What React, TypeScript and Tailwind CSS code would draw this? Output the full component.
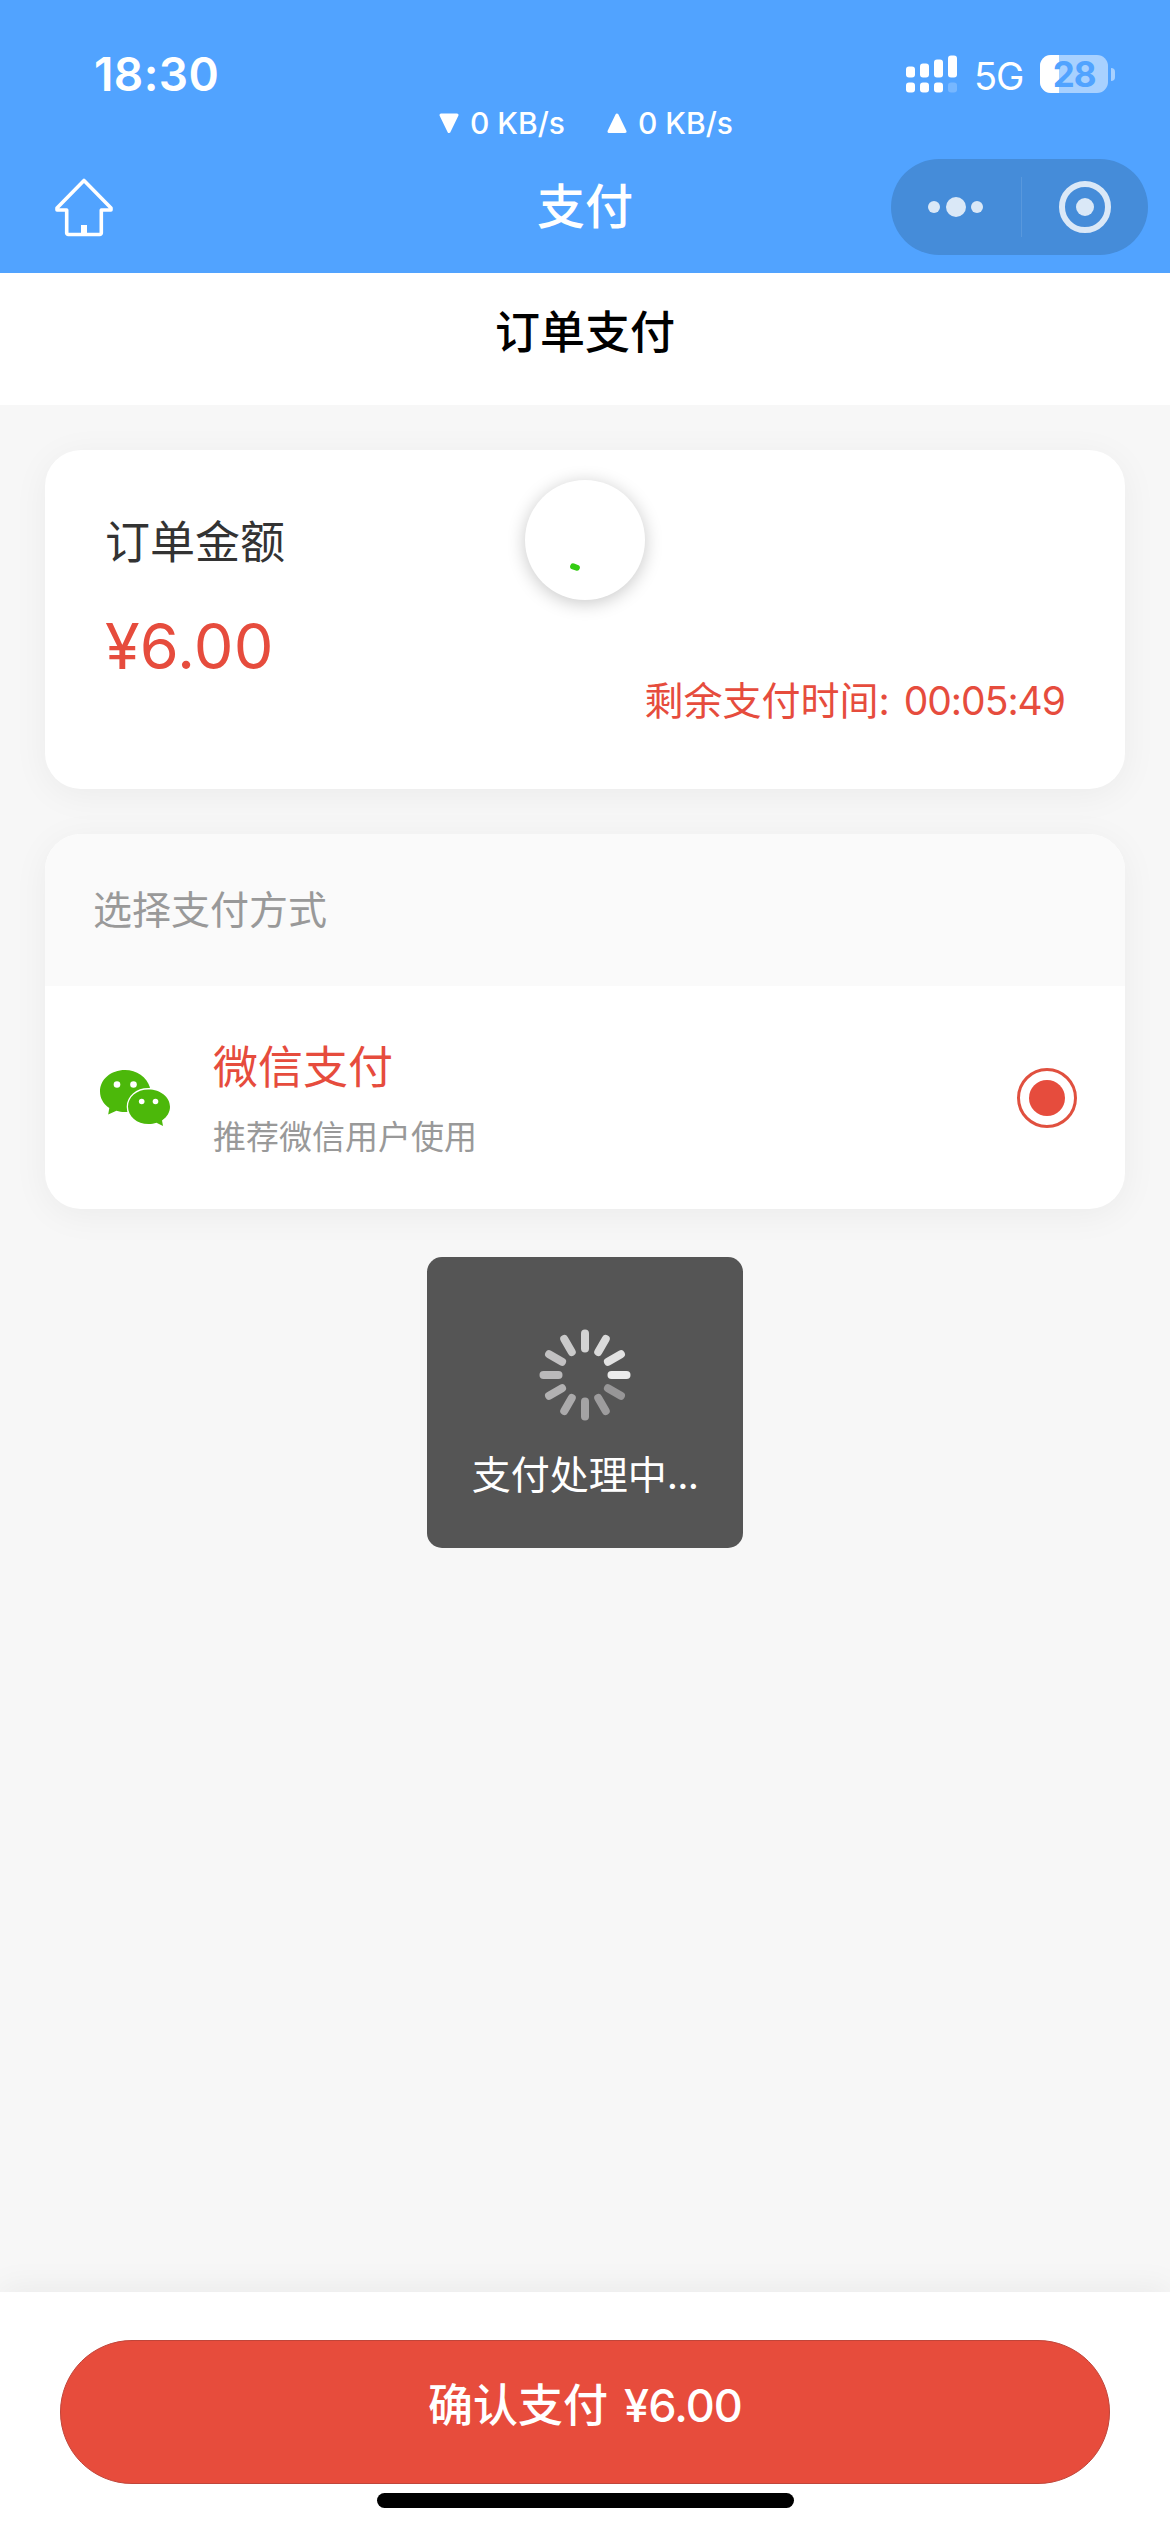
import React from "react";

const SPOKES = [
  "#d3d3d3", "#dadada", "#e2e2e2", "#ebebeb", "#979697", "#9d9c9d",
  "#a4a3a4", "#abaaab", "#b2b1b2", "#bab9ba", "#c2c1c2", "#cacaca",
];

function HomeIcon() {
  return (
    <svg width="60" height="60" viewBox="0 0 60 60" fill="none" stroke="#fff" strokeWidth="3.6" strokeLinejoin="round" strokeLinecap="round">
      <path d="M30 3.5 57 31v2H47.3V56a1.5 1.5 0 0 1-1.5 1.5H14.2A1.5 1.5 0 0 1 12.7 56V33H3v-2Z" />
      <path d="M30 48v8" strokeWidth="6" strokeLinecap="butt" />
    </svg>
  );
}

function Speed({ up }: { up?: boolean }) {
  return (
    <div className="flex items-center">
      <svg width="20" height="22" viewBox="0 0 20 22" fill="#fff" stroke="#fff" strokeWidth="3" strokeLinejoin="round">
        {up ? <path d="M10 3 18 19.5H2Z" /> : <path d="M10 19.5 18 3H2Z" />}
      </svg>
      <span className="ml-[11px] w-[94px] whitespace-nowrap text-[30px] leading-[36px] font-medium">0 KB/s</span>
    </div>
  );
}

function Signal() {
  return (
    <svg width="52" height="38" viewBox="0 0 52 38" fill="#fff">
      <rect x="0" y="11.5" width="9" height="11" rx="3" />
      <rect x="14" y="8.5" width="9" height="14" rx="3" />
      <rect x="28" y="4.5" width="9" height="18" rx="3" />
      <rect x="42" y="0.5" width="9" height="22" rx="3" />
      <rect x="0" y="27.5" width="9" height="10" rx="3" />
      <rect x="14" y="27.5" width="9" height="10" rx="3" />
      <rect x="28" y="27.5" width="9" height="10" rx="3" />
      <rect x="42" y="27.5" width="9" height="10" rx="3" opacity="0.22" />
    </svg>
  );
}

function Battery() {
  return (
    <div className="flex items-center">
      <div className="relative flex h-[38px] w-[68px] items-center justify-center rounded-[11px] bg-[#a8d1ff]">
        <div className="absolute inset-y-0 left-0 w-[19px] rounded-l-[11px] bg-white" />
        <span className="relative text-[35px] leading-[38px] font-bold tracking-[-1.2px] text-[#51a3ff]">28</span>
      </div>
      <div className="ml-[3px] h-[13px] w-[4px] rounded-r-full bg-[#a8d1ff]" />
    </div>
  );
}

function Capsule() {
  return (
    <div className="flex h-[96px] w-[257px] shrink-0 items-center rounded-full bg-[#458cd9]">
      <div className="flex w-[130px] items-center justify-center gap-[5.5px]">
        <span className="size-[12px] rounded-full bg-[#dae8f7]" />
        <span className="size-[20px] rounded-full bg-[#dae8f7]" />
        <span className="size-[12px] rounded-full bg-[#dae8f7]" />
      </div>
      <div className="h-[60px] w-px bg-[#5898dd]" />
      <div className="flex flex-1 items-center justify-center">
        <div className="flex size-[52px] items-center justify-center rounded-full border-6 border-[#dae8f7]">
          <span className="size-[18px] rounded-full bg-[#dae8f7]" />
        </div>
      </div>
    </div>
  );
}

function WechatIcon() {
  return (
    <svg width="70" height="56" viewBox="0 0 70 56">
      <path fill="#4cb80a" d="M25 0C11 0 0 9.3 0 21.5c0 6.8 3.5 12.6 9.3 16.6L8.2 44.5l8.2-3.7c4 1.2 7 1.5 11 1.1L50 17.5C46.8 7 36.5 0 25 0Z" />
      <path fill="#4cb80a" stroke="#fff" strokeWidth="2.6" paintOrder="stroke" d="M48.5 19.4C36.5 19.4 28 27 28 36.7S37 54 48.500 54c3 0 5.5-.4 8-1.300l6.5 3.300-1-5.600c5-3.400 8-8.200 8-13.700 0-9.700-9.500-17.300-21.500-17.300Z" />
      <g fill="#fff">
        <circle cx="17" cy="14.5" r="3.3" />
        <circle cx="33.5" cy="14.5" r="3.3" />
        <circle cx="41.7" cy="31.5" r="2.8" />
        <circle cx="55.5" cy="31.5" r="2.8" />
      </g>
    </svg>
  );
}

function Spinner() {
  return (
    <svg width="92" height="92" viewBox="-46 -46 92 92">
      {SPOKES.map((c, i) => (
        <rect key={i} x="-4" y="-45.5" width="8" height="23" rx="4" fill={c} transform={`rotate(${i * 30})`} />
      ))}
    </svg>
  );
}

export default function App() {
  return (
    <div className="relative flex h-[2532px] w-[1170px] flex-col overflow-hidden bg-[#f7f7f7] font-['Inter','Noto_Sans_CJK_SC',sans-serif]">
      <header className="relative h-[273px] shrink-0 bg-[#51a3ff] text-white">
        <div className="flex h-[148px] items-start justify-between pt-[55px] pr-[55px] pl-[94px]">
          <span className="text-[46px] leading-[38px] font-semibold tracking-[0.4px]">18:30</span>
          <div className="flex items-center">
            <Signal />
            <span className="ml-[16px] w-[50px] pt-[3px] text-[38px] leading-[34px] tracking-[-1px]">5G</span>
            <div className="ml-[16px]"><Battery /></div>
          </div>
        </div>
        <div className="absolute top-[105px] left-[439px] flex gap-[43px]">
          <Speed />
          <Speed up />
        </div>
        <div className="flex h-[118px] items-center justify-between pr-[22px] pl-[54px]">
          <div className="w-[225px]"><HomeIcon /></div>
          <h1 className="text-center text-[48px] leading-[60px] font-medium">支付</h1>
          <Capsule />
        </div>
      </header>

      <div className="flex h-[132px] shrink-0 items-start justify-center bg-white pt-[30px]">
        <h2 className="text-[45px] leading-[60px] font-medium text-black">订单支付</h2>
      </div>

      <main className="flex flex-1 flex-col gap-[45px] px-[45px] pt-[45px]">
        <section className="relative flex h-[339px] shrink-0 flex-col rounded-[36px] bg-white px-[60px] pt-[63px] shadow-[0_6px_36px_rgba(0,0,0,0.05)]">
          <span className="text-[45px] leading-[60px] text-[#333333]">订单金额</span>
          <span className="mt-[35px] text-[63px] leading-[76px] tracking-[0.2px] text-[#e64c3d]">¥6.00</span>
          <span className="-mt-[11px] flex self-end whitespace-nowrap text-[39px] leading-[56px] text-[#e64c3d]">
            <span>剩余支付时间:</span>
            <span className="ml-[14px] tracking-[-1px]">00:05:49</span>
          </span>
          <div className="absolute top-[30px] left-[480px] size-[120px] rounded-full bg-white shadow-[0_3px_18px_rgba(0,0,0,0.22)]">
            <div className="absolute top-[83.5px] left-[45px] h-[6px] w-[9.5px] rotate-[20deg] rounded-full bg-[#33cc12]" />
          </div>
        </section>

        <section className="h-[375px] shrink-0 overflow-hidden rounded-[36px] bg-white shadow-[0_6px_36px_rgba(0,0,0,0.05)]">
          <div className="h-[152px] bg-[#fafafa] px-[48px] pt-[48px] text-[39px] leading-[56px] text-[#999999]">选择支付方式</div>
          <div className="flex h-[223px] items-center pr-[48px] pl-[55px]">
            <WechatIcon />
            <div className="ml-[43px] flex flex-1 flex-col pt-[2px]">
              <span className="text-[45px] leading-[60px] text-[#e64c3d]">微信支付</span>
              <span className="mt-[16px] text-[33px] leading-[46px] text-[#999999]">推荐微信用户使用</span>
            </div>
            <div className="flex size-[60px] items-center justify-center rounded-full border-3 border-[#e0503f]">
              <span className="size-[36px] rounded-full bg-[#e64c3d]" />
            </div>
          </div>
        </section>
      </main>

      <footer className="flex h-[240px] shrink-0 flex-col items-center bg-white pt-[48px] shadow-[0_-6px_30px_rgba(0,0,0,0.05)]">
        <button className="flex h-[144px] w-[1050px] items-start justify-center rounded-full border border-[#c0453a] bg-[#e74c3c] pt-[33px] text-[45px] leading-[64px] font-medium text-white">
          <span>确认支付</span>
          <span className="ml-[16px] tracking-[-0.9px]">¥6.00</span>
        </button>
        <div className="mt-[9px] h-[15px] w-[417px] rounded-full bg-black" />
      </footer>

      <div className="absolute top-[1257px] left-[427px] flex h-[291px] w-[316px] flex-col items-center rounded-[15px] bg-[#555555] pt-[72px]">
        <Spinner />
        <span className="mt-[26px] whitespace-nowrap text-[39px] leading-[56px] text-white">支付处理中<span className="tracking-[-0.8px]">...</span></span>
      </div>
    </div>
  );
}
